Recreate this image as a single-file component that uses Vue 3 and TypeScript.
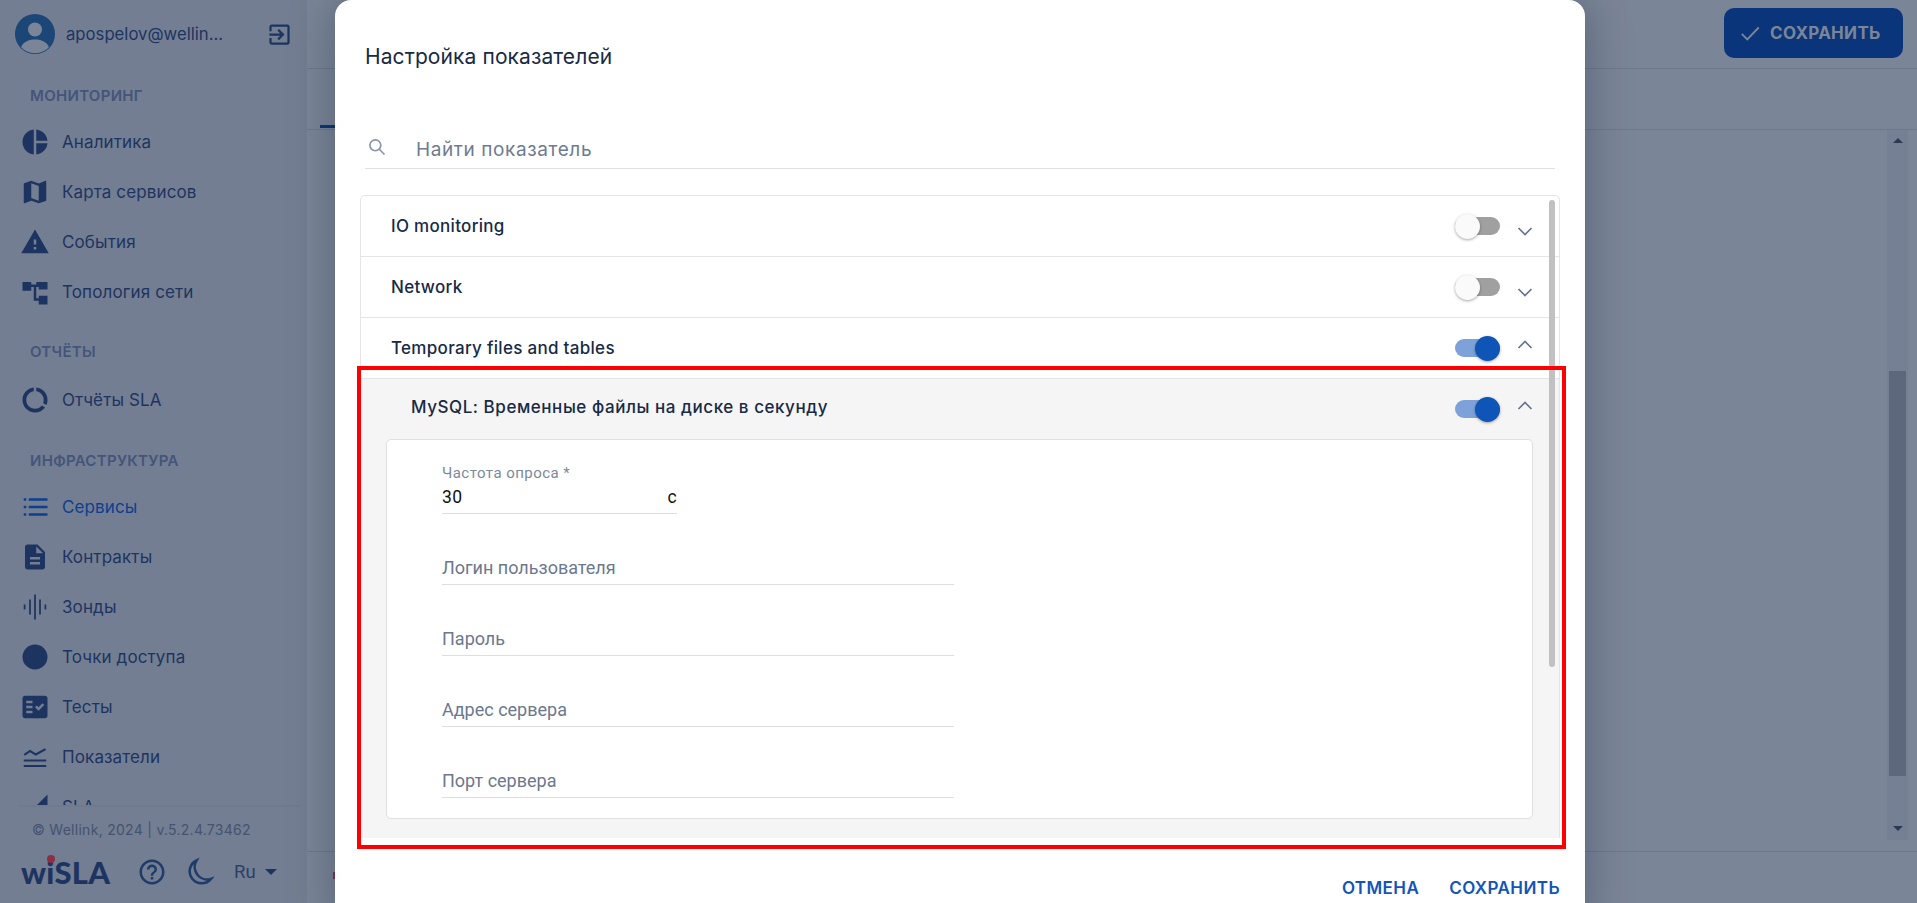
<script setup lang="ts">
interface NavItem { label: string; path?: string; active?: boolean; kind?: string }
interface NavGroup { title: string; items: NavItem[] }

const groups: NavGroup[] = [
  { title: 'МОНИТОРИНГ', items: [
    { label: 'Аналитика', path: 'M11 2v20c-5.07-.5-9-4.79-9-10s3.93-9.5 9-10zm2.03 0v8.99H22c-.47-4.74-4.24-8.52-8.97-8.99zm0 11.01V22c4.74-.47 8.5-4.25 8.97-8.99h-8.97z' },
    { label: 'Карта сервисов', path: 'M20.5 3l-.16.03L15 5.1 9 3 3.36 4.9c-.21.07-.36.25-.36.48V20.5c0 .28.22.5.5.5l.16-.03L9 18.9l6 2.1 5.64-1.9c.21-.07.36-.25.36-.48V3.5c0-.28-.22-.5-.5-.5zM15 19l-6-2.11V5l6 2.11V19z' },
    { label: 'События', path: 'M1 21h22L12 2 1 21zm12-3h-2v-2h2v2zm0-4h-2v-4h2v4z' },
    { label: 'Топология сети', path: 'M2 4h7v2h4v-2h9v6h-7V8h-2v9h2v-2h7v7h-7v-3h-4V8H9v3H2z' },
  ] },
  { title: 'ОТЧЁТЫ', items: [
    { label: 'Отчёты SLA', path: 'M13 2.05v3.03c3.39.49 6 3.39 6 6.92 0 .9-.18 1.75-.48 2.54l2.6 1.53c.56-1.24.88-2.62.88-4.07 0-5.18-3.95-9.45-9-9.95zM12 19c-3.87 0-7-3.13-7-7 0-3.53 2.61-6.43 6-6.92V2.05c-5.06.5-9 4.76-9 9.95 0 5.52 4.47 10 9.99 10 3.31 0 6.24-1.61 8.06-4.09l-2.6-1.53C16.17 17.98 14.21 19 12 19z' },
  ] },
  { title: 'ИНФРАСТРУКТУРА', items: [
    { label: 'Сервисы', active: true, path: 'M3 5h2v2H3zM7 5h15v2H7zM3 11h2v2H3zM7 11h15v2H7zM3 17h2v2H3zM7 17h15v2H7z' },
    { label: 'Контракты', path: 'M14 2H6c-1.1 0-1.99.9-1.99 2L4 20c0 1.1.89 2 1.99 2H18c1.1 0 2-.9 2-2V8l-6-6zm2 16H8v-2h8v2zm0-4H8v-2h8v2zm-3-5V3.5L18.5 9H13z' },
    { label: 'Зонды', path: 'M3 10h1.4v4H3zM7.3 6h1.4v12H7.3zM11.3 2h1.4v20h-1.4zM15.3 6h1.4v12h-1.4zM19.6 10H21v4h-1.4z' },
    { label: 'Точки доступа', path: 'M12 2a10 10 0 1 0 0 20a10 10 0 1 0 0-20z' },
    { label: 'Тесты', path: 'M20 3H4c-1.1 0-2 .9-2 2v14c0 1.1.9 2 2 2h16c1.1 0 2-.9 2-2V5c0-1.1-.9-2-2-2zM10 17H5v-2h5v2zm0-4H5v-2h5v2zm0-4H5V7h5v2zm4.82 6L12 12.16l1.41-1.41 1.41 1.42L17.99 9l1.42 1.42L14.82 15z' },
    { label: 'Показатели', path: 'M3 14h18v1.6H3zM3 18.4h18V20H3zM3 9.6l5-3.4 4.5 2.8L20 5l.9 1.3L12.6 11 8 8.1 3.9 11z' },
    { label: 'SLA', path: 'M2 22h20V2z' },
  ] },
];

const panels = [
  { title: 'IO monitoring', on: false },
  { title: 'Network', on: false },
  { title: 'Temporary files and tables', on: true },
];
const fields = ['Логин пользователя', 'Пароль', 'Адрес сервера', 'Порт сервера'];
</script>

<template>
  <div class="page">
    <aside class="sidebar">
      <div class="user">
        <svg class="avatar" viewBox="0 0 40 40">
          <circle cx="20" cy="20" r="20" fill="#1b4676" />
          <circle cx="20" cy="15.5" r="7" fill="#7b8598" />
          <path d="M6 33c3-6 9-7.500 14-7.500s11 1.500 14 7.500c-3.500 4-8.500 6.200-14 6.200S9.500 37 6 33z" fill="#7b8598" />
        </svg>
        <span class="user-name">apospelov@wellin...</span>
        <svg class="logout" viewBox="0 0 24 24"><path d="M10.090 15.590L11.500 17l5-5-5-5-1.410 1.410L12.670 11H3v2h9.670l-2.580 2.590zM19 3H5c-1.110 0-2 .9-2 2v4h2V5h14v14H5v-4H3v4c0 1.100.89 2 2 2h14c1.100 0 2-.9 2-2V5c0-1.100-.9-2-2-2z" /></svg>
      </div>
      <nav class="nav">
        <section v-for="g in groups" :key="g.title" class="group">
          <h4 class="group-title">{{ g.title }}</h4>
          <div v-for="it in g.items" :key="it.label" class="nav-item" :class="{ active: it.active }">
            <svg class="nav-icon" viewBox="0 0 24 24"><path :d="it.path" /></svg>
            <span>{{ it.label }}</span>
          </div>
        </section>
      </nav>
      <footer class="side-foot">
        <div class="copyright">© Wellink, 2024 | v.5.2.4.73462</div>
        <div class="tools">
          <div class="logo">wiSLA<i class="logo-dot"></i></div>
          <svg class="tool help" viewBox="0 0 24 24"><path d="M11 18h2v-2h-2v2zm1-16C6.480 2 2 6.480 2 12s4.480 10 10 10 10-4.480 10-10S17.520 2 12 2zm0 18c-4.410 0-8-3.590-8-8s3.590-8 8-8 8 3.590 8 8-3.590 8-8 8zm0-14c-2.210 0-4 1.790-4 4h2c0-1.100.9-2 2-2s2 .9 2 2c0 2-3 1.750-3 5h2c0-2.250 3-2.500 3-5 0-2.210-1.790-4-4-4z" /></svg>
          <svg class="tool moon" viewBox="0 0 24 24"><path d="M10 2.800A9.600 9.600 0 1 0 21.600 17.500A10 10 0 0 1 10 2.800Z" /></svg>
          <span class="lang">Ru</span><i class="lang-caret"></i>
        </div>
      </footer>
    </aside>

    <main class="main">
      <header class="main-head">
        <button class="head-save">
          <svg class="head-check" viewBox="0 0 24 24"><path d="M3 13l6 6L21.500 6" /></svg>
          СОХРАНИТЬ
        </button>
      </header>
      <div class="tabs"><i class="tab-mark"></i></div>
      <div class="content">
        <div class="page-scroll">
          <i class="arrow-up"></i>
          <i class="page-thumb"></i>
          <i class="arrow-down"></i>
        </div>
      </div>
      <div class="main-foot"><i class="foot-mark"></i></div>
    </main>

    <section class="modal">
      <h2 class="modal-title">Настройка показателей</h2>
      <div class="search">
        <svg class="search-icon" viewBox="0 0 24 24"><circle cx="10" cy="10" r="6.500" /><path d="M15 15l6 6" /></svg>
        <span>Найти показатель</span>
      </div>
      <div class="panels">
        <div v-for="p in panels" :key="p.title" class="row">
          <span class="row-title">{{ p.title }}</span>
          <span class="toggle" :class="{ on: p.on }"><i class="thumb"></i></span>
          <svg class="chev" :class="{ open: p.on }" viewBox="0 0 16 10"><path d="M1.500 2l6.500 6.500L14.500 2" /></svg>
        </div>
        <div class="sub">
          <div class="sub-head">
            <span class="row-title">MySQL: Временные файлы на диске в секунду</span>
            <span class="toggle on"><i class="thumb"></i></span>
            <svg class="chev open" viewBox="0 0 16 10"><path d="M1.500 2l6.500 6.500L14.500 2" /></svg>
          </div>
          <div class="card">
            <div class="field-first">
              <div class="field-label">Частота опроса *</div>
              <div class="field-value"><span>30</span><span>с</span></div>
            </div>
            <div v-for="f in fields" :key="f" class="field">{{ f }}</div>
          </div>
        </div>
        <i class="inner-scroll"></i>
      </div>
      <div class="actions">
        <span>ОТМЕНА</span>
        <span>СОХРАНИТЬ</span>
      </div>
    </section>

    <div class="highlight"></div>
  </div>
</template>

<style scoped>
.page {
  position: relative;
  display: flex;
  width: 1917px;
  height: 903px;
  overflow: hidden;
  background: #7b8598;
  font-family: Inter, "Noto Sans", sans-serif;
  color: #1e3460;
}

/* Sidebar */
.sidebar {
  width: 307px;
  flex: none;
  display: flex;
  flex-direction: column;
  background: #737e92;
}
.user {
  height: 68px;
  flex: none;
  display: flex;
  align-items: center;
  padding-left: 15px;
}
.avatar { width: 40px; height: 40px; flex: none; }
.user-name { margin-left: 11px; width: 201px; font-size: 16.7px; color: #1e3460; white-space: nowrap; }
.logout { width: 27px; height: 27px; fill: #1e3460; flex: none; margin-left: -1px; }
.nav { flex: none; height: 737px; overflow: hidden; }
.group-title {
  margin: 23px 0 11px 30px;
  height: 24px;
  line-height: 24px;
  font-size: 15px;
  font-weight: 600;
  letter-spacing: .3px;
  color: #44557a;
}
.group:first-child .group-title { margin-top: 16px; margin-bottom: 9px; }
.group:last-child .group-title { margin-top: 24px; margin-bottom: 9px; }
.nav-item {
  height: 50px;
  display: flex;
  align-items: center;
  padding-left: 20px;
  font-size: 17px;
  letter-spacing: .12px;
  color: #1e3460;
}
.nav-icon { width: 30px; height: 30px; fill: #1e3460; flex: none; margin-right: 12px; }
.nav-item.active { color: #0e3f8f; }
.nav-item.active .nav-icon { fill: #0e3f8f; }
.side-foot {
  flex: 1;
  margin: 0 8px 0 18px;
  border-top: 2px solid #6f7a8e;
  position: relative;
}
.copyright { margin: 14px 0 0 14px; font-size: 14px; line-height: 18px; color: #44536f; letter-spacing: .28px; }
.tools { display: flex; align-items: center; margin-top: 13px; height: 40px; }
.logo {
  position: relative;
  width: 106px;
  margin-left: 3px;
  font-family: Lato, Inter, sans-serif;
  font-size: 31px;
  font-weight: 900;
  letter-spacing: .2px;
  color: #1e3460;
  line-height: 40px;
}
.logo-dot {
  position: absolute;
  left: 26px;
  top: 3px;
  width: 8px;
  height: 8px;
  border-radius: 50%;
  background: #8c2f45;
}
.tool { width: 30px; height: 30px; flex: none; }
.help { fill: #1e3b69; margin-left: 10px; }
.moon { margin-left: 17px; fill: none; stroke: #1e3b69; stroke-width: 2; }
.lang { margin-left: 20px; font-family: Roboto, sans-serif; font-size: 18.5px; color: #2c4068; }
.lang-caret {
  margin-left: 9px;
  width: 0;
  height: 0;
  border-left: 6px solid transparent;
  border-right: 6px solid transparent;
  border-top: 6px solid #1e3460;
}

/* Main */
.main { flex: 1; display: flex; flex-direction: column; min-width: 0; }
.main-head {
  height: 69px;
  flex: none;
  border-bottom: 1px solid #6e788c;
  box-sizing: border-box;
  display: flex;
  justify-content: flex-end;
  padding: 8px 14px 0 0;
}
.head-save {
  width: 179px;
  height: 50px;
  border: 0;
  border-radius: 10px;
  background: #0b357a;
  color: #7b8598;
  font-family: Inter, sans-serif;
  font-size: 17px;
  font-weight: 700;
  letter-spacing: .3px;
  display: flex;
  align-items: center;
  padding: 0 0 0 15px;
  gap: 9px;
}
.head-check { width: 22px; height: 22px; fill: none; stroke: #7b8598; stroke-width: 2; flex: none; }
.tabs { position: relative; height: 61px; flex: none; border-bottom: 1px solid #6e788c; box-sizing: border-box; }
.tab-mark { position: absolute; left: 13px; bottom: 1px; width: 20px; height: 3px; background: #0b357a; }
.content { flex: 1; position: relative; display: flex; justify-content: flex-end; padding-right: 9px; }
.page-scroll {
  width: 21px;
  height: 710px;
  background: #768095;
  position: relative;
}
.arrow-up, .arrow-down {
  position: absolute;
  left: 6px;
  width: 0;
  height: 0;
  border-left: 5px solid transparent;
  border-right: 5px solid transparent;
}
.arrow-up { top: 8px; border-bottom: 5px solid #2d3a55; }
.arrow-down { bottom: 9px; border-top: 5px solid #2d3a55; }
.page-thumb { position: absolute; left: 2px; top: 241px; width: 17px; height: 405px; background: #5e687c; }
.main-foot { height: 51px; flex: none; border-top: 1px solid #6e788c; position: relative; }
.foot-mark { position: absolute; left: 26px; top: 20px; width: 2px; height: 7px; background: #8c2f45; }

/* Modal */
.modal {
  position: absolute;
  left: 335px;
  top: 0;
  width: 1250px;
  height: 930px;
  background: #fff;
  border-radius: 16px;
  box-shadow: 0 0 45px rgba(20, 30, 50, .35);
  display: flex;
  flex-direction: column;
}
.modal-title {
  margin: 0;
  padding: 43px 0 0 30px;
  box-sizing: border-box;
  height: 98px;
  font-size: 21px;
  line-height: 28px;
  font-weight: 400;
  letter-spacing: .1px;
  color: #172a46;
}
.search {
  margin-left: 30px;
  width: 1190px;
  height: 71px;
  box-sizing: border-box;
  border-bottom: 1px solid #dfe1e5;
  display: flex;
  align-items: flex-end;
  padding-bottom: 6px;
  font-size: 19px;
  line-height: 24px;
  color: #6e7b91;
}
.search-icon { width: 20px; height: 20px; margin: 0 0 5px 2px; fill: none; stroke: #8995a7; stroke-width: 2; flex: none; }
.search span { margin-left: 29px; letter-spacing: .6px; }
.panels {
  position: relative;
  margin: 26px 0 0 25px;
  width: 1200px;
  height: 643px;
  box-sizing: border-box;
  border: 1px solid #e5e5e5;
  border-bottom: 0;
  border-radius: 5px 5px 0 0;
  overflow: hidden;
}
.row, .sub-head {
  display: flex;
  align-items: center;
  height: 61px;
  box-sizing: border-box;
  padding-right: 26px;
}
.row { border-bottom: 1px solid #e5e5e5; padding-left: 30px; }
.row-title { flex: 1; font-size: 17px; font-weight: 500; color: #172a46; letter-spacing: .3px; }
.sub { background: #f5f5f5; height: 459px; box-sizing: border-box; padding: 0 26px 0 25px; }
.sub-head { height: 60px; margin-right: -26px; padding-left: 25px; }
.sub-head .row-title { letter-spacing: .55px; transform: translateY(-2px); }
.toggle {
  position: relative;
  width: 45px;
  height: 18px;
  border-radius: 9px;
  background: #a0a0a0;
  flex: none;
}
.toggle.on { background: #7da2da; }
.thumb {
  position: absolute;
  left: 0;
  top: -3.5px;
  width: 25px;
  height: 25px;
  border-radius: 50%;
  background: #fafafa;
  box-shadow: 0 1px 3px rgba(0, 0, 0, .35);
}
.toggle.on .thumb { left: 20px; background: #0f55b8; }
.chev {
  width: 16px;
  height: 10px;
  margin-left: 17px;
  fill: none;
  stroke: #66738c;
  stroke-width: 1.700;
  transform: translateY(5px);
  flex: none;
}
.chev.open { transform: translateY(-3px) rotate(180deg); }
.card {
  height: 380px;
  box-sizing: border-box;
  background: #fff;
  border: 1px solid #e0e0e0;
  border-radius: 5px;
  padding: 25px 0 0 55px;
  font-family: Roboto, sans-serif;
}
.field-first {
  width: 235px;
  height: 49px;
  box-sizing: border-box;
  border-bottom: 1px solid #dcdee2;
}
.field-label { font-size: 15px; line-height: 16px; color: #7d889b; letter-spacing: .45px; }
.field-value {
  display: flex;
  justify-content: space-between;
  padding-top: 3px;
  font-size: 17.5px;
  line-height: 26px;
  color: #111;
  letter-spacing: .3px;
}
.field {
  width: 512px;
  height: 71px;
  box-sizing: border-box;
  border-bottom: 1px solid #dcdee2;
  display: flex;
  align-items: flex-end;
  padding-bottom: 4px;
  font-size: 18px;
  line-height: 24px;
  color: #6b7890;
}
.inner-scroll {
  position: absolute;
  left: 1188px;
  top: 4px;
  width: 6px;
  height: 467px;
  border-radius: 3px;
  background: #c1c1c1;
}
.actions {
  display: flex;
  justify-content: flex-end;
  gap: 30px;
  margin-top: 40px;
  padding-right: 25px;
  font-size: 17px;
  font-weight: 600;
  letter-spacing: .42px;
  line-height: 20px;
  color: #1254b8;
}

/* Annotation */
.highlight {
  position: absolute;
  left: 357px;
  top: 366px;
  width: 1209px;
  height: 483px;
  box-sizing: border-box;
  border: 4px solid #ff0000;
}
</style>
